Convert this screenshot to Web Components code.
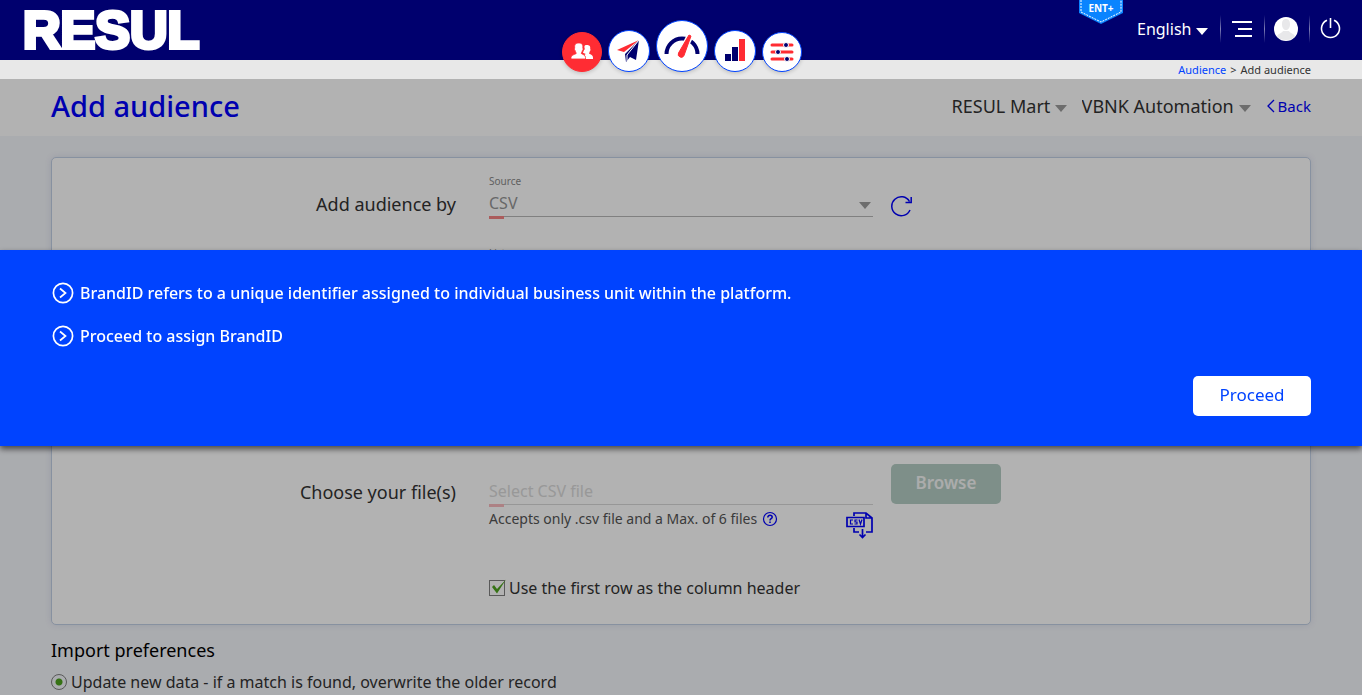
<!DOCTYPE html>
<html lang="en">
<head>
<meta charset="utf-8">
<meta name="viewport" content="width=device-width, initial-scale=1">
<title>Add audience</title>
<style>
  html, body { height: 100%; }
  body { margin: 0; overflow: hidden; background: #f4f6fb; color: #333; font: 16px/24px "Noto Sans", "Open Sans", sans-serif; }
</style>
</head>
<body>
<audience-page></audience-page>

<script>
const define = (name, html) => {
  const tpl = document.createElement('template');
  tpl.innerHTML = html;
  customElements.define(name, class extends HTMLElement {
    constructor() {
      super();
      this.attachShadow({ mode: 'open' }).append(tpl.content.cloneNode(true));
    }
  });
};

/* Drop-down with a solid triangle; the select itself is passed in by the user */
define('arrow-select', `
<style>
  :host { display: inline-flex; align-items: center; position: relative; }
  ::slotted(select) { appearance: none; border: 0; margin: 0; padding: 0 18px 0 0; background: none; color: inherit; font: inherit; outline: 0; flex: 1; opacity: 1; }
  i { position: absolute; right: 2px; bottom: 6px; border: 6px solid transparent; border-top: 7px solid var(--arrow, #9c9c9c); border-bottom: 0; pointer-events: none; }
</style>
<slot></slot><i></i>`);

/* Round shortcut of the product bar */
define('nav-circle', `
<style>
  :host { display: block; }
  a { display: grid; place-items: center; box-sizing: border-box; width: var(--size, 42px); height: var(--size, 42px); border-radius: 50%; background: var(--fill, #fff); border: 1px solid var(--edge, #0043ff); box-shadow: 0 1px 4px rgba(0,0,0,.2); }
</style>
<a href="#"><slot></slot></a>`);

define('product-nav', `
<style>
  :host { display: block; }
  nav { display: flex; align-items: flex-end; gap: 6px; padding-left: 2px; }
  svg { display: block; }
  .side { --size: 40px; }
  .on { --fill: #ff2c33; --edge: #ff2c33; }
  .main { --size: 52px; }
</style>
<nav aria-label="Products">
  <nav-circle class="side on"><svg width="24" height="20" viewBox="0 0 24 20" fill="#fff"><path d="M14 17v-1.500c0-2 .5-2.800 1.800-3.500l-2.800-1.300c0-1 1-1.400 1-2.700.8-.3 1-1.500.5-2.100C14 3.500 15 3 17 3s3.700.8 3.200 4c.6.5.3 1.900-.4 2.200-.2 1.200-.7 1.600-.7 2.500 1.500.9 3.900 1 3.900 4V17z"/><path d="M1 17v-1.500c0-2.700 3.500-2.700 5.200-4 0-1-.9-1.500-1-3-.8-.2-1.100-1.800-.5-2.300C4.200 2 6 1 8.800 1s4.600 1.300 4 5.200c.6.5.3 2.100-.5 2.300-.1 1.500-1 2-1 3 1.700 1.300 4.200 1.300 4.200 4V17z" stroke="#ff2c33" stroke-width=".8"/></svg></nav-circle>
  <nav-circle><svg width="26" height="26" viewBox="0 0 26 26"><path d="M1 12 23 2 8 14z" fill="#ff2c33"/><path d="m23 2-3 20-6-3-4 5-1-8z" fill="#00006e"/><path d="m23 2-12 15v6" fill="none" stroke="#fff"/></svg></nav-circle>
  <nav-circle class="main"><svg width="38" height="28" viewBox="0 0 38 28"><path d="M3.500 22a15.500 15.500 0 0 1 31 0" fill="none" stroke="#00006e" stroke-width="4"/><path d="M20 18 28 2" stroke="#fff" stroke-width="7"/><path d="m15.500 21 10.500-18 2 1-7 19.500a3 3 0 0 1-5.500-2.500z" fill="#ff2c33" stroke="#ff2c33"/></svg></nav-circle>
  <nav-circle><svg width="22" height="24" viewBox="0 0 22 24"><path fill="#00006e" d="M1 15h6v7H1zM8 8h6v14H8z"/><path fill="#ff2c33" d="M15 0h6v22h-6z"/></svg></nav-circle>
  <nav-circle class="side"><svg width="24" height="20" viewBox="0 0 24 20"><path d="M2 3h20M2 10h20M2 17h20" stroke="#ff2c33" stroke-width="3" stroke-linecap="round"/><g fill="#00006e" stroke="#fff"><circle cx="16" cy="3" r="2.500"/><circle cx="8" cy="10" r="2.500"/><circle cx="17" cy="17" r="2.500"/></g></svg></nav-circle>
</nav>`);

define('app-header', `
<style>
  :host { display: block; position: relative; z-index: 3; }
  header { display: grid; grid-template-columns: 1fr auto 1fr; height: 60px; background: #00006e; }
  .logo { padding-left: 23px; font: 700 52px/60px "Liberation Sans", Arial, sans-serif; color: #fff; -webkit-text-stroke: 4px #fff; text-decoration: none; }
  product-nav { align-self: end; margin-bottom: -12px; }
  .tools { display: flex; justify-content: flex-end; align-items: center; padding: 0 20px 3px 0; color: #fff; }
  .tools svg { display: block; }
  .badge { align-self: flex-start; position: relative; width: 46px; margin-right: 13px; }
  .badge span { position: absolute; inset: 1px 0 auto; text-align: center; font: 700 10px/14px "Noto Sans", sans-serif; }
  arrow-select { --arrow: #fff; margin-right: 10px; }
  option { color: #333; }
  button { border: 0; background: none; padding: 0; }
  .bar { width: 1px; height: 28px; background: linear-gradient(transparent, #8080b6, transparent); }
  .menu { margin: 0 11px; } .user { margin: 0 10px 0 8px; } .power { margin-left: 9px; }
  .crumbs { display: flex; justify-content: flex-end; gap: 4px; box-sizing: border-box; padding-right: 51px; background: #e8e8e8; font-size: 11px; line-height: 19px; }
  .crumbs a { color: #0043ff; text-decoration: none; }
</style>
<header>
  <a class="logo" href="#">RESUL</a>
  <product-nav></product-nav>
  <div class="tools">
    <div class="badge"><svg width="46" height="24" viewBox="0 0 46 24"><path d="M1 0h44v13L23 24 1 13z" fill="#0a84ff"/><path d="M3 0v12l20 10 20-10V0" fill="none" stroke="#fff" stroke-dasharray="2 1"/></svg><span>ENT+</span></div>
    <arrow-select><select aria-label="Language"><option>English</option></select></arrow-select>
    <div class="bar"></div>
    <button class="menu" aria-label="Menu"><svg width="21" height="18" viewBox="0 0 21 18"><path d="M0 2h20M6 9h14M3 16h17" stroke="#fff" stroke-width="2"/></svg></button>
    <div class="bar"></div>
    <button class="user" aria-label="Account"><svg width="26" height="26" viewBox="0 0 26 26"><circle cx="13" cy="13" r="12" fill="#fff"/><path d="M9 8c0-4 2-5 4-5s4 1 4 5-2 6-4 6-4-2-4-6M4 20c2-3 5-3 6-5h6c1 2 4 2 6 5-2 3-5 4-9 4s-7-1-9-4" fill="#e8e8ea"/></svg></button>
    <div class="bar"></div>
    <button class="power" aria-label="Log out"><svg width="23" height="23" viewBox="0 0 23 23" fill="none" stroke="#fff" stroke-width="1.600"><path d="M8 3.200a9 9 0 1 0 7 0M11.500 1v10"/></svg></button>
  </div>
</header>
<nav class="crumbs" aria-label="Breadcrumb"><a href="#">Audience</a><span>&gt;</span><span>Add audience</span></nav>`);

define('title-bar', `
<style>
  :host { display: flex; align-items: center; box-sizing: border-box; height: 57px; padding: 0 51px 4px; background: #fff; }
  h1 { margin: 0 auto 0 0; font-size: 29px; line-height: 36px; font-weight: 500; color: #0000fc; }
  arrow-select { font-size: 18px; margin-right: 13px; }
  a { display: flex; align-items: center; gap: 3px; color: #0000fc; font-size: 15px; text-decoration: none; }
</style>
<h1><slot></slot></h1>
<arrow-select><select aria-label="Company"><option>RESUL Mart</option></select></arrow-select>
<arrow-select><select aria-label="Business unit"><option>VBNK Automation</option></select></arrow-select>
<a href="#"><svg width="9" height="16" viewBox="0 0 9 16" fill="none" stroke="currentColor" stroke-width="1.300"><path d="M8 2 2 8l6 6"/></svg>Back</a>`);

/* Underlined field with a short red mark for required values */
define('line-field', `
<style>
  :host { display: block; position: relative; border-bottom: 1px solid #b8b8b8; height: 42px; }
  :host::after { content: ""; position: absolute; left: 0; bottom: -3px; width: 15px; height: 3px; background: var(--mark, #f58585); }
  label { display: block; font-size: 10px; line-height: 14px; height: 14px; color: #8a8a8a; }
  .box { display: flex; line-height: 24px; padding-top: 3px; color: #959595; }
</style>
<label><slot name="label"></slot></label>
<div class="box"><slot></slot></div>`);

define('form-row', `
<style>
  :host { display: grid; grid-template-columns: 419fr 384fr 419fr; column-gap: 18px; align-items: start; }
  .label { text-align: right; padding: 18px 15px 0 0; font-size: 18px; line-height: 24px; }
</style>
<div class="label"><slot name="label"></slot></div>
<div><slot></slot></div>
<div><slot name="side"></slot></div>`);

define('audience-form', `
<style>
  :host { display: block; }
  .card { box-sizing: border-box; margin: 21px 51px 0; padding: 16px 0 24px; background: #fff; border: 1px solid #c2d0e5; border-radius: 5px; box-shadow: 0 0 6px rgba(80,100,150,.15); }
  .rows { display: grid; grid-auto-rows: 72px; }
  .file { grid-row: 5; }
  .last { margin-top: 42px; }
  arrow-select { flex: 1; }
  button { font: inherit; border: 0; margin: 0; }
  .icon { display: block; padding: 0; background: none; color: #0000fc; }
  .reload { margin-top: 21px; }
  input[type=text] { flex: 1; min-width: 0; border: 0; padding: 0; background: none; font: inherit; outline: 0; }
  input[type=text]::placeholder { color: #dadada; opacity: 1; }
  .file line-field { --mark: #f8b9bd; border-color: #d9d9d9; }
  .browse { height: 40px; width: 110px; margin-top: 2px; padding-bottom: 3px; border-radius: 5px; background: #b5cdc4; color: #f5f7f6; font-size: 17px; font-weight: 600; }
  .hint { display: flex; align-items: flex-start; gap: 5px; padding-top: 2px; font-size: 14px; line-height: 24px; color: #555; }
  .hint .help { margin-top: 3px; }
  .hint .csv { margin: 4px 0 0 auto; }
  .check { display: flex; align-items: center; gap: 4px; line-height: 24px; white-space: nowrap; }
  input[type=checkbox], input[type=radio] { appearance: none; box-sizing: border-box; width: 16px; height: 16px; margin: 0; border: 1px solid #808080; background: #fff; }
  .tick { position: relative; display: flex; }
  .tick svg { position: absolute; left: 1px; bottom: 1px; pointer-events: none; }
  input[type=radio] { border-radius: 50%; background: radial-gradient(#4ea41f 3px, transparent 4px); }
  .prefs { padding: 0 51px; }
  h2 { margin: 13px 0 8px; font-size: 18px; line-height: 24px; font-weight: 400; color: #000; }
</style>
<section class="card">
  <div class="rows">
    <form-row>
      <span slot="label">Add audience by</span>
      <line-field><span slot="label">Source</span><arrow-select><select aria-label="Source"><option>CSV</option></select></arrow-select></line-field>
      <button slot="side" class="icon reload" aria-label="Refresh"><svg width="22" height="22" viewBox="0 0 22 22" fill="none" stroke="currentColor" stroke-width="1.500"><path d="M19 15a9.500 9.500 0 1 1-.5-8.500M20.200 2v5.500H14.500"/></svg></button>
    </form-row>
    <form-row>
      <line-field><span slot="label">List name</span><input type="text" aria-label="List name"></line-field>
    </form-row>
    <form-row class="file">
      <span slot="label">Choose your file(s)</span>
      <line-field><input type="text" aria-label="CSV file" placeholder="Select CSV file"></line-field>
      <div class="hint">Accepts only .csv file and a Max. of 6 files
        <button class="icon help" aria-label="Help"><svg width="16" height="16" viewBox="0 0 16 16" fill="none" stroke="currentColor"><circle cx="8" cy="8" r="6.500" stroke-width="1.200"/><path d="M5.800 6.500c0-3 4.400-2.700 4.400-.2C10.200 7.800 8 7.700 8 9.500M8 10.500V12" stroke-width="1.500"/></svg></button>
        <button class="icon csv" aria-label="Download sample"><svg width="28" height="28" viewBox="0 0 28 28" fill="none" stroke="currentColor" stroke-width="1.700"><path d="M9 5V2h12l6 5v14h-6M14 21H9v-4M21 2v5h6"/><path d="M2 6.500h17v9H2z"/><path d="M8 9H5.500v4H8M12.500 9H10v2h2v2H9.500M14 8.500l1.500 4.500L17 8.500" stroke-width="1.200"/><path d="M17.500 18v8M14.500 23.500l3 3 3-3"/></svg></button>
      </div>
      <button slot="side" class="browse">Browse</button>
    </form-row>
  </div>
  <form-row class="last">
    <label class="check"><span class="tick"><input type="checkbox" checked><svg width="17" height="16" viewBox="0 0 17 16"><path d="m2 8 2-2 3 4 9-9.500L7 14.500z" fill="#4ea41f"/></svg></span>Use the first row as the column header</label>
  </form-row>
</section>
<section class="prefs">
  <h2>Import preferences</h2>
  <label class="check"><input type="radio" checked>Update new data - if a match is found, overwrite the older record</label>
</section>`);

/* Full-width notice, centred over the shaded page */
define('notice-dialog', `
<style>
  :host { position: fixed; inset: 0; z-index: 2; display: flex; align-items: center; background: rgba(0,0,0,.3); }
  section { flex: 1; padding: 30px 51px; background: #0043ff; color: #fff; box-shadow: 0 3px 6px rgba(0,0,0,.6); }
  ul { list-style: none; margin: 0; padding: 0; display: grid; gap: 16px; font-size: 16px; line-height: 27px; font-weight: 500; }
  ::slotted(li) { display: block; }
  .end { display: flex; justify-content: flex-end; margin-top: 26px; }
  button { width: 118px; height: 40px; border: 0; border-radius: 5px; padding-bottom: 3px; background: #fff; color: #0043ff; font: 17px/24px "Noto Sans", sans-serif; }
</style>
<section role="dialog" aria-label="BrandID">
  <ul><slot></slot></ul>
  <div class="end"><button>Proceed</button></div>
</section>`);

define('notice-item', `
<style>
  :host { display: flex; align-items: center; gap: 5px; }
  svg { flex: none; }
</style>
<svg width="24" height="24" viewBox="0 0 24 24" fill="none" stroke="currentColor" stroke-width="1.700"><circle cx="12" cy="12" r="9.600"/><path d="m9 7.500 5.500 4.500L9 16.500"/></svg><slot></slot>`);

define('audience-page', `
<style>
  :host { display: block; min-height: 100%; }
</style>
<app-header></app-header>
<main>
  <title-bar>Add audience</title-bar>
  <audience-form></audience-form>
</main>
<notice-dialog>
  <li><notice-item>BrandID refers to a unique identifier assigned to individual business unit within the platform.</notice-item></li>
  <li><notice-item>Proceed to assign BrandID</notice-item></li>
</notice-dialog>`);
</script>
</body>
</html>
